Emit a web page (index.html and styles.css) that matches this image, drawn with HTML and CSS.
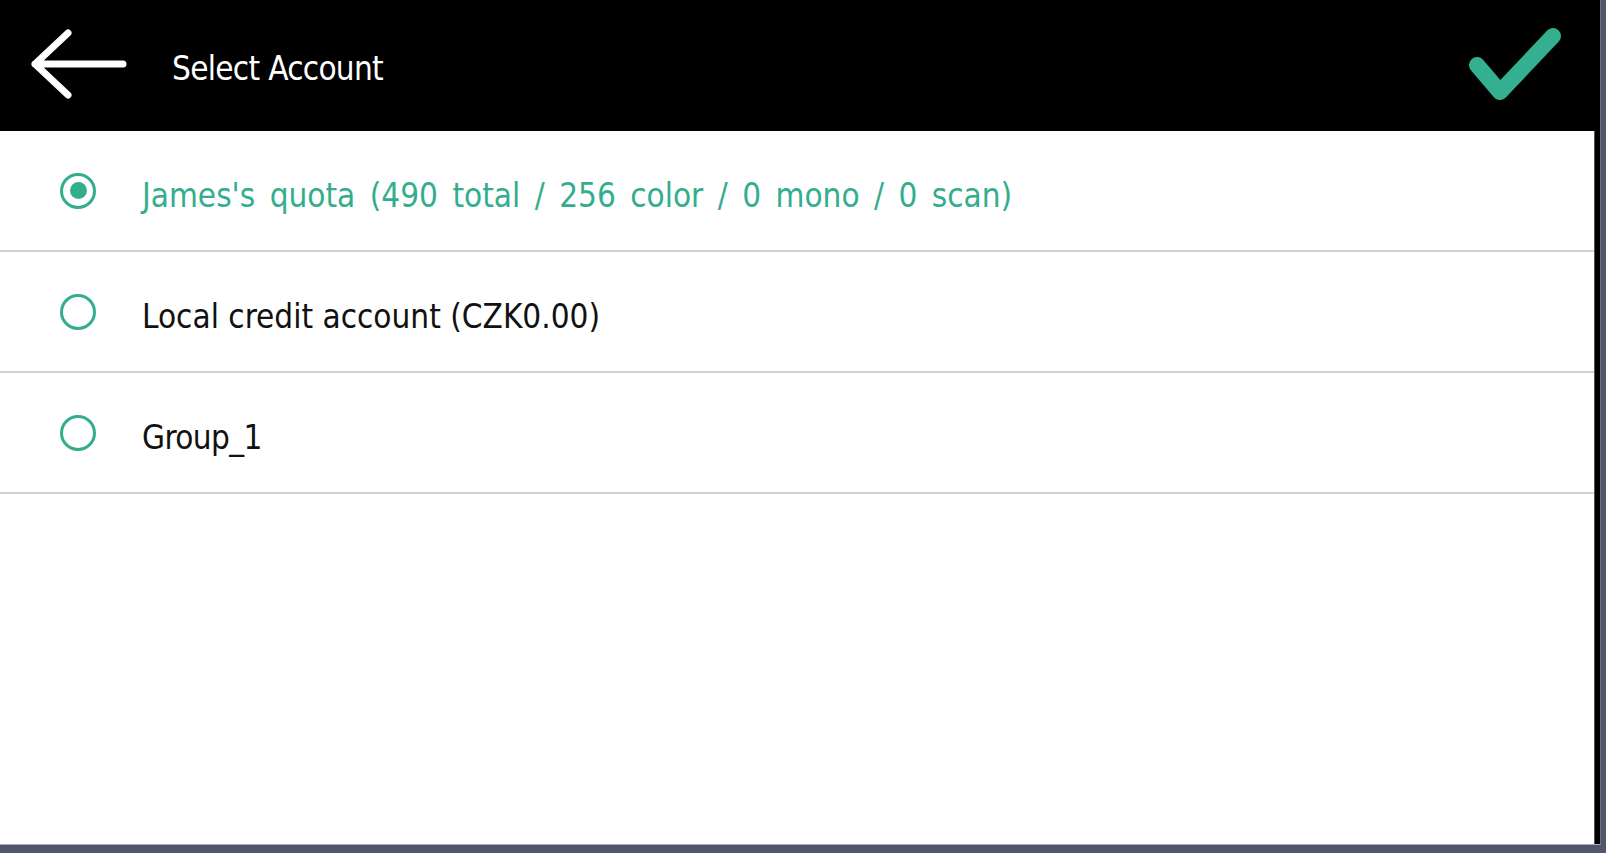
FILE: index.html
```html
<!DOCTYPE html>
<html lang="en">
<head>
    <meta charset="UTF-8">
    <title>Select Account</title>
    <link rel="stylesheet" href="styles.css">
</head>
<body>
    <div class="screen">
        <header class="topbar">
            <button class="back-btn" type="button" aria-label="Back">
                <svg width="100" height="74" viewBox="0 0 100 74">
                    <path d="M6 36 H94 M39 5 L6 36 L39 67" fill="none" stroke="#fff" stroke-width="7" stroke-linecap="round" stroke-linejoin="round"/>
                </svg>
            </button>
            <h1 class="title">Select Account</h1>
            <button class="ok-btn" type="button" aria-label="Confirm">
                <svg width="104" height="84" viewBox="0 0 104 84">
                    <path d="M17 42 L40 69 L93 13" fill="none" stroke="#34b091" stroke-width="16" stroke-linecap="round" stroke-linejoin="round"/>
                </svg>
            </button>
        </header>

        <main class="content">
            <ul class="accounts">
                <li class="account selected">
                    <span class="radio"></span>
                    <span class="label">James's quota (490 total / 256 color / 0 mono / 0 scan)</span>
                </li>
                <li class="account">
                    <span class="radio"></span>
                    <span class="label">Local credit account (CZK0.00)</span>
                </li>
                <li class="account">
                    <span class="radio"></span>
                    <span class="label">Group_1</span>
                </li>
            </ul>
        </main>
    </div>
</body>
</html>
```

FILE: styles.css
```css
body {
    margin: 0;
    padding: 0;
    width: 1606px;
    height: 853px;
    overflow: hidden;
    background-color: #53566a;
    font-family: "DejaVu Sans Condensed", "DejaVu Sans", sans-serif;
}

.screen {
    width: 1600px;
    height: 844px;
    display: flex;
    flex-direction: column;
    background-color: #000;
    border-right: 1px solid #6d7188;
    border-bottom: 1px solid #a9acbf;
}

.topbar {
    height: 131px;
    flex-shrink: 0;
    display: flex;
    align-items: center;
    padding: 0 36px 0 29px;
}

.back-btn,
.ok-btn {
    background: none;
    border: none;
    padding: 0;
    margin: 0;
    display: flex;
    cursor: pointer;
}

.back-btn {
    margin-top: -2px;
}

.title {
    margin: 6px 0 0 43px;
    flex: 1;
    color: #fff;
    font-weight: normal;
    font-size: 33px;
    letter-spacing: -0.7px;
}

.ok-btn {
    margin-top: -2px;
}

.content {
    flex: 1;
    background-color: #fff;
    margin-right: 5px;
    border-right: 1px solid #555;
}

.accounts {
    list-style: none;
    margin: 0;
    padding: 0;
}

.account {
    height: 119px;
    display: flex;
    align-items: center;
    gap: 46px;
    padding-left: 60px;
    border-bottom: 2px solid #d2d2d2;
    font-size: 33px;
    color: #111;
}

.label {
    margin-top: 9px;
}

.radio {
    width: 30px;
    height: 30px;
    border: 3px solid #34ad8f;
    border-radius: 50%;
    display: flex;
    align-items: center;
    justify-content: center;
}

.account.selected .radio::after {
    content: "";
    width: 17px;
    height: 17px;
    border-radius: 50%;
    background-color: #34ad8f;
}

.account.selected .label {
    color: #34ad8f;
    word-spacing: 5px;
}

.account:last-child .label {
    letter-spacing: -0.6px;
}
```
